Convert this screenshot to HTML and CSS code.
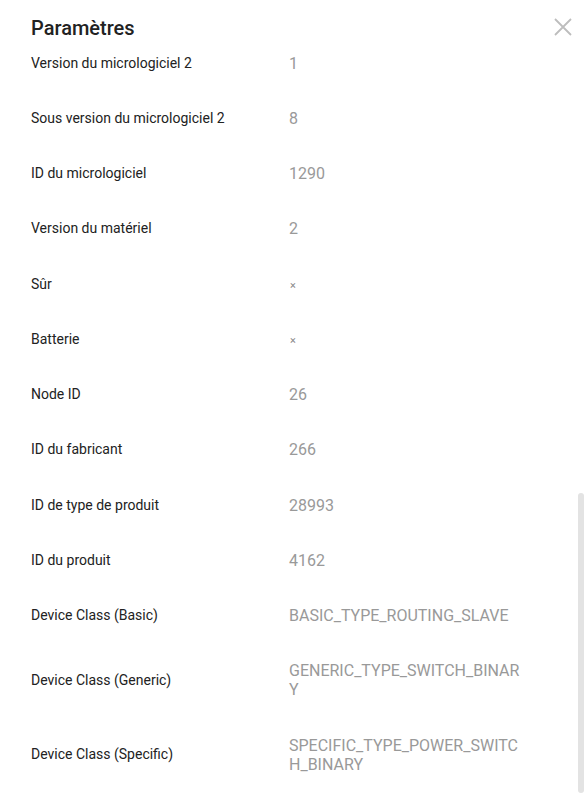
FILE: index.html
```html
<!DOCTYPE html>
<html lang="fr">
<head>
<meta charset="utf-8">
<title>Paramètres</title>
<link rel="stylesheet" href="styles.css">
</head>
<body>
<div class="panel">
  <header class="header">
    <h1 class="title">Paramètres</h1>
    <button class="close" aria-label="Fermer">
      <svg width="18" height="18" viewBox="0 0 18 18"><path d="M1 1 L17 17 M17 1 L1 17" stroke="#bdbdbd" stroke-width="1.8" fill="none"/></svg>
    </button>
  </header>
  <div class="list">
    <div class="row"><div class="label">Version du micrologiciel 2</div><div class="value">1</div></div>
    <div class="row"><div class="label">Sous version du micrologiciel 2</div><div class="value">8</div></div>
    <div class="row"><div class="label">ID du micrologiciel</div><div class="value">1290</div></div>
    <div class="row"><div class="label">Version du matériel</div><div class="value">2</div></div>
    <div class="row"><div class="label">Sûr</div><div class="value"><span class="cross">×</span></div></div>
    <div class="row"><div class="label">Batterie</div><div class="value"><span class="cross">×</span></div></div>
    <div class="row"><div class="label">Node ID</div><div class="value">26</div></div>
    <div class="row"><div class="label">ID du fabricant</div><div class="value">266</div></div>
    <div class="row"><div class="label">ID de type de produit</div><div class="value">28993</div></div>
    <div class="row"><div class="label">ID du produit</div><div class="value">4162</div></div>
    <div class="row"><div class="label">Device Class (Basic)</div><div class="value">BASIC_TYPE_ROUTING_SLAVE</div></div>
    <div class="row"><div class="label">Device Class (Generic)</div><div class="value">GENERIC_TYPE_SWITCH_BINARY</div></div>
    <div class="row"><div class="label">Device Class (Specific)</div><div class="value">SPECIFIC_TYPE_POWER_SWITCH_BINARY</div></div>
  </div>
  <div class="scrollbar"></div>
</div>
</body>
</html>
```
FILE: styles.css
```css
* { box-sizing: border-box; }
html, body { margin: 0; padding: 0; background: #fff; }
body { font-family: Roboto, "Liberation Sans", sans-serif; width: 585px; height: 805px; overflow: hidden; }
.panel { position: relative; height: 805px; overflow: hidden; }
.header { height: 50px; display: flex; align-items: center; justify-content: space-between; padding: 0 13px 0 31px; }
.title { margin: 0; font-size: 20px; font-weight: 500; color: #222; line-height: 24px; padding-top: 5px; }
.close { border: 0; background: none; padding: 0; width: 18px; height: 18px; display: flex; margin-top: 4px; }
.list { display: flex; flex-direction: column; }
.row { display: flex; align-items: center; padding: 3.5px 0 32.75px 31px; }
.label { width: 258px; font-size: 14px; line-height: 19px; color: #222; }
.value { width: 236px; min-height: 19px; font-size: 16px; line-height: 19px; color: #999; word-break: break-all; }
.cross { display: block; height: 19px; font-size: 11px; line-height: 21px; padding-left: 1px; color: #888; }
.scrollbar { position: absolute; right: 1px; top: 493px; width: 6px; height: 300px; border-radius: 3px; background: #e3e3e3; }
```
